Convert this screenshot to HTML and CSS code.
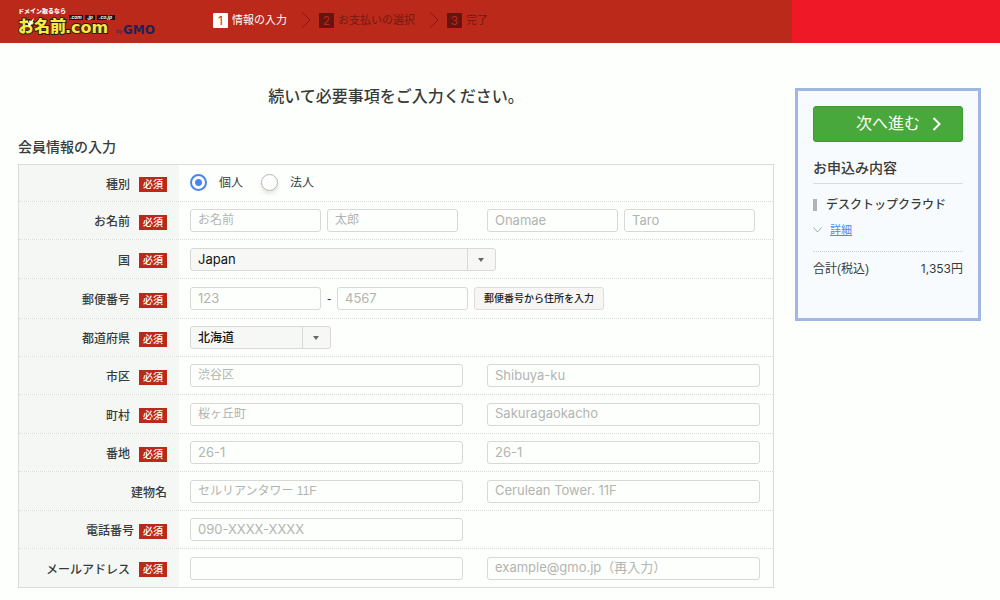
FILE: index.html
```html
<!DOCTYPE html>
<html lang="ja">
<head>
<meta charset="utf-8">
<title>お名前.com</title>
<link rel="stylesheet" href="styles.css">
</head>
<body>
<header class="header">
  <div class="header-main">
    <a class="logo" href="#" aria-label="お名前.com by GMO">
      <svg width="142" height="32" viewBox="0 0 142 32">
        <text class="logo-tag" x="2" y="7">ドメイン取るなら</text>
        <text class="logo-name" x="2" y="26">お名前</text>
        <text class="logo-com" x="49" y="27">.com</text>
        <path fill="#17130f" d="M53 9h14v5H53zM69 9h10v5H69zM81 9h18v5H81z"/>
        <text class="logo-domain" x="54" y="13">.com</text>
        <text class="logo-domain" x="71" y="13">.jp</text>
        <text class="logo-domain" x="83" y="13">.co.jp</text>
        <path fill="#fff" d="M10 14l3 3 5-5-2 6-3 3-1-3z"/>
        <text class="logo-by" x="100" y="27">by</text>
        <text class="logo-gmo" x="107" y="28">GMO</text>
      </svg>
    </a>
    <ol class="steps">
      <li class="step current"><span class="num">1</span>情報の入力</li>
      <li class="step"><svg class="arrow" width="10" height="16" viewBox="0 0 10 16"><path d="M1 0l8 8-8 8"/></svg><span class="num">2</span>お支払いの選択</li>
      <li class="step"><svg class="arrow" width="10" height="16" viewBox="0 0 10 16"><path d="M1 0l8 8-8 8"/></svg><span class="num">3</span>完了</li>
    </ol>
  </div>
  <div class="header-side"></div>
</header>
<div class="page">
  <main class="main">
    <h1 class="lead">続いて必要事項をご入力ください。</h1>
    <h2 class="title">会員情報の入力</h2>
    <form class="form" id="member">
      <div class="row">
        <div class="label">種別<span class="badge">必須</span></div>
        <div class="fields radios">
          <label class="radio"><input type="radio" name="kind" checked>個人</label>
          <label class="radio"><input type="radio" name="kind">法人</label>
        </div>
      </div>
      <div class="row">
        <label class="label" for="sei">お名前<span class="badge">必須</span></label>
        <div class="fields">
          <div class="group"><input class="text short" id="sei" placeholder="お名前"><input class="text short" aria-label="名" placeholder="太郎"></div>
          <div class="group"><input class="text short latin" aria-label="姓（ローマ字）" placeholder="Onamae"><input class="text short latin" aria-label="名（ローマ字）" placeholder="Taro"></div>
        </div>
      </div>
      <div class="row">
        <label class="label" for="country">国<span class="badge">必須</span></label>
        <div class="fields wide"><span class="select country"><select id="country"><option>Japan</option></select></span></div>
      </div>
      <div class="row">
        <label class="label" for="zip">郵便番号<span class="badge">必須</span></label>
        <div class="fields wide">
          <div class="group"><input class="text short latin" id="zip" placeholder="123"><span class="dash">-</span><input class="text short latin" aria-label="郵便番号 下4桁" placeholder="4567"><button class="lookup" type="button">郵便番号から住所を入力</button></div>
        </div>
      </div>
      <div class="row">
        <label class="label" for="pref">都道府県<span class="badge">必須</span></label>
        <div class="fields wide"><span class="select pref"><select id="pref"><option>北海道</option></select></span></div>
      </div>
      <div class="row">
        <label class="label" for="city">市区<span class="badge">必須</span></label>
        <div class="fields"><input class="text" id="city" placeholder="渋谷区"><input class="text latin" aria-label="市区（ローマ字）" placeholder="Shibuya-ku"></div>
      </div>
      <div class="row">
        <label class="label" for="town">町村<span class="badge">必須</span></label>
        <div class="fields"><input class="text" id="town" placeholder="桜ヶ丘町"><input class="text latin" aria-label="町村（ローマ字）" placeholder="Sakuragaokacho"></div>
      </div>
      <div class="row">
        <label class="label" for="block">番地<span class="badge">必須</span></label>
        <div class="fields"><input class="text latin" id="block" placeholder="26-1"><input class="text latin" aria-label="番地（英語）" placeholder="26-1"></div>
      </div>
      <div class="row">
        <label class="label" for="building">建物名</label>
        <div class="fields"><input class="text" id="building" placeholder="セルリアンタワー 11F"><input class="text latin" aria-label="建物名（英語）" placeholder="Cerulean Tower. 11F"></div>
      </div>
      <div class="row">
        <label class="label tight" for="tel">電話番号<span class="badge">必須</span></label>
        <div class="fields"><input class="text latin" id="tel" type="tel" placeholder="090-XXXX-XXXX"></div>
      </div>
      <div class="row">
        <label class="label" for="mail">メールアドレス<span class="badge">必須</span></label>
        <div class="fields"><input class="text latin" id="mail" type="email"><input class="text latin" type="email" aria-label="メールアドレス（再入力）" placeholder="example@gmo.jp（再入力）"></div>
      </div>
    </form>
  </main>
  <aside class="side">
    <div class="card">
      <button class="next" type="submit" form="member">次へ進む<svg width="10" height="16" viewBox="0 0 10 16"><path d="M1.5 2l6 6-6 6"/></svg></button>
      <h2 class="card-title">お申込み内容</h2>
      <p class="product">デスクトップクラウド</p>
      <p class="detail"><svg width="9" height="6" viewBox="0 0 9 6"><path d="M.5.5l4 4.500 4-4.500"/></svg><a href="#">詳細</a></p>
      <p class="total"><span>合計(税込)</span><span class="price">1,353円</span></p>
    </div>
  </aside>
</div>
</body>
</html>
```
FILE: styles.css
```css
* { box-sizing: border-box; }
body {
  margin: 0;
  background: #fdfffc;
  color: #383b39;
  font: 12px/18px "Liberation Sans", "Noto Sans CJK JP", sans-serif;
}
h1, h2, p, ol { margin: 0; padding: 0; }
input, select, button { font: inherit; margin: 0; }

.header, .page { display: grid; grid-template-columns: 1fr 208px; }
.header { height: 43px; }
.header-main {
  display: flex;
  align-items: center;
  gap: 55px;
  padding-left: 16px;
  background: #bb291b;
}
.header-side { background: #ef1826; }
.logo { display: block; height: 32px; }
.logo svg { display: block; }
.logo text { font-family: "Noto Sans CJK JP", sans-serif; font-weight: 900; }
.logo .logo-tag { font-size: 6px; fill: #fff; }
.logo .logo-name, .logo .logo-com {
  font-size: 16px;
  fill: #f5e946;
  stroke: #2a1c10;
  stroke-width: 2px;
  paint-order: stroke;
}
.logo .logo-com { font-family: "DejaVu Sans", sans-serif; font-size: 16px; font-weight: 700; }
.logo .logo-domain { font-family: "Liberation Sans", sans-serif; font-size: 5px; font-style: italic; font-weight: 700; fill: #fff; }
.logo .logo-by { font-family: "Liberation Sans", sans-serif; font-size: 6px; font-weight: 400; fill: #26265b; }
.logo .logo-gmo { font-family: "DejaVu Sans", sans-serif; font-size: 12px; font-weight: 700; fill: #1f2259; }
.steps { display: flex; list-style: none; padding-bottom: 3px; }
.step { display: flex; align-items: center; font-size: 11px; color: #731a12; margin-right: 14px; }
.step.current { color: #fff; }
.num {
  width: 15px;
  height: 15px;
  margin-right: 4px;
  border-radius: 1px;
  background: #65150f;
  color: #bb291b;
  font: 12px/15px Inter, sans-serif;
  text-align: center;
}
.current .num { background: #fff; }
.arrow { margin-right: 8px; fill: none; stroke: #84190f; }

.main { padding: 0 18px 12px; }
.lead { margin-top: 42px; font-size: 16px; line-height: 24px; font-weight: 500; text-align: center; }
.title { margin: 28px 0 7px; font-size: 14px; line-height: 20px; font-weight: 500; }
.form { border: 1px solid #d9dcda; }
.row { display: grid; grid-template-columns: 160px 1fr; min-height: 38px; }
.row:nth-child(odd) { min-height: 39px; }
.row:nth-child(1) { min-height: 36px; }
.row:nth-child(4) { min-height: 40px; }
.row:nth-child(5) { min-height: 38px; }
.row + .row { border-top: 1px dotted #d9dcda; }
.label {
  display: flex;
  align-items: center;
  justify-content: flex-end;
  gap: 9px;
  padding: 3px 12px 0 0;
  background: #f5f7f5;
  font-weight: 500;
}
.label.tight { gap: 5px; }
.badge {
  padding: 0 4px;
  background: #bb291b;
  color: #fff;
  font-size: 10px;
  line-height: 15px;
}
.fields {
  display: grid;
  grid-template-columns: 1fr 1fr;
  align-items: center;
  gap: 24px;
  padding: 0 13px 0 11px;
}
.fields.wide { grid-template-columns: 1fr; }
.fields.radios { display: flex; gap: 18px; padding-bottom: 1px; }
.radio { display: flex; align-items: center; gap: 12px; }
.radio input {
  appearance: none;
  width: 17px;
  height: 17px;
  border: 1px solid #b5b7b5;
  border-radius: 50%;
  background: #fff;
  box-shadow: 0 3px 4px #e4e6e4;
}
.radio input:checked {
  border: 2px solid #4c83ee;
  background: radial-gradient(circle, #4c83ee 3px, #fff 4px);
  box-shadow: none;
}
.group { display: flex; align-items: center; gap: 6px; }
.text {
  width: 100%;
  height: 23px;
  padding: 0 7px 1px;
  border: 1px solid #d6d9d7;
  border-radius: 3px;
  background: #fdfffc;
}
.text.short { width: 131px; }
.text::placeholder { color: #b2b4b2; opacity: 1; }
.latin { padding-bottom: 2px; font-family: Inter, "Noto Sans CJK JP", sans-serif; font-size: 13px; }
.dash { width: 4px; font-size: 13px; }
.lookup {
  height: 23px;
  padding: 0 9px;
  border: 1px solid #dfdbdb;
  border-radius: 3px;
  background: #f7f6f5;
  color: #222;
  font-size: 10px;
  font-weight: 500;
}
.select { display: block; position: relative; }
.select::before, .select::after { content: ""; position: absolute; pointer-events: none; }
.select::before { top: 0; bottom: 0; right: 28px; border-left: 1px solid #d6d9d7; }
.select::after { top: 10px; right: 12px; border: 3px solid transparent; border-top: 4px solid #666; border-bottom: 0; }
.select select {
  display: block;
  appearance: none;
  width: 100%;
  height: 23px;
  padding: 0 7px;
  border: 1px solid #d6d9d7;
  border-radius: 3px;
  background: #f7f8f6;
  color: #111;
}
.country { width: 306px; }
.country select { font-family: Inter, sans-serif; font-size: 13px; }
.pref { width: 141px; }
.pref select { font-weight: 500; }

.side { padding: 45px 19px 0 3px; }
.card {
  min-height: 233px;
  padding: 15px;
  border: 3px solid #a2b6e6;
  background: #f8fbfe;
}
.next {
  display: flex;
  align-items: center;
  justify-content: flex-end;
  gap: 12px;
  width: 100%;
  height: 36px;
  padding: 0 20px 0 0;
  border: 1px solid #3f9b33;
  border-radius: 3px;
  background: #49a83b;
  color: #fff;
  font-size: 16px;
}
.next svg { fill: none; stroke: #fff; stroke-width: 2; }
.card-title { margin-top: 16px; padding-bottom: 5px; border-bottom: 1px solid #dadddf; font-size: 14px; line-height: 20px; font-weight: 500; }
.product { display: flex; align-items: center; gap: 9px; margin-top: 12px; font-weight: 500; }
.product::before { content: ""; width: 4px; height: 12px; background: #b1b3b2; }
.detail { display: flex; align-items: center; gap: 8px; margin-top: 7px; font-size: 11px; }
.detail svg { fill: none; stroke: #a4a8a8; }
.detail a { color: #4f8af5; }
.total {
  display: flex;
  justify-content: space-between;
  margin-top: 12px;
  padding-top: 8px;
  border-top: 1px dotted #ccd0d2;
}
.price { font-family: Inter, "Noto Sans CJK JP", sans-serif; }
```
